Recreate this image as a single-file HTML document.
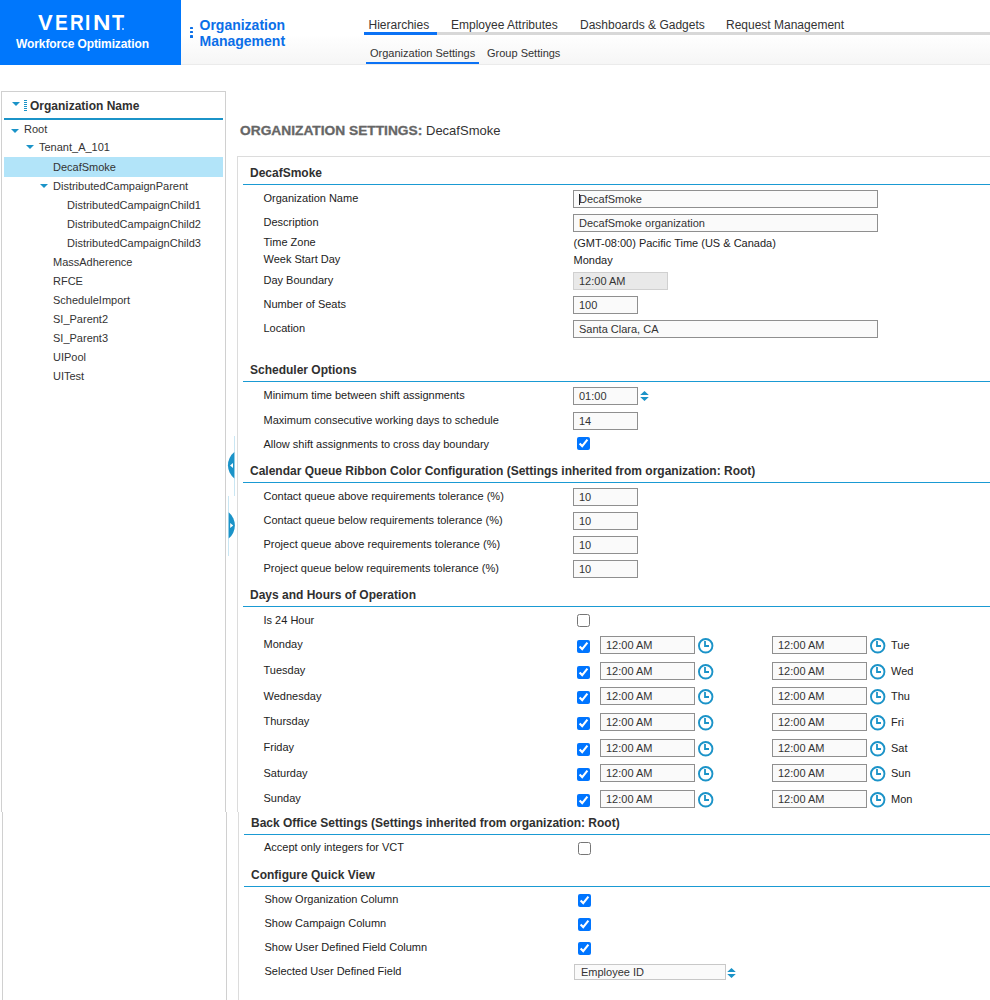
<!DOCTYPE html>
<html><head><meta charset="utf-8"><style>
html,body{margin:0;padding:0}
body{width:990px;height:1000px;overflow:hidden;position:relative;background:#fff;font-family:"Liberation Sans",sans-serif;color:#333}
.t{position:absolute;white-space:nowrap;line-height:1}
input[type=checkbox]{accent-color:#0075ff}
</style></head><body>
<div style="position:absolute;left:0px;top:0px;width:181px;height:65px;background:#0077fc"></div>
<div class="t" style="left:38px;top:12px;font-size:22px;font-weight:bold;color:#fff;transform:scaleX(1.0);transform-origin:0 0;">V</div>
<div class="t" style="left:55px;top:12px;font-size:22px;font-weight:bold;color:#fff;transform:scaleX(0.87);transform-origin:0 0;">E</div>
<div class="t" style="left:70px;top:12px;font-size:22px;font-weight:bold;color:#fff;transform:scaleX(0.86);transform-origin:0 0;">R</div>
<div class="t" style="left:84.8px;top:12px;font-size:22px;font-weight:bold;color:#fff;transform:scaleX(0.86);transform-origin:0 0;">I</div>
<div class="t" style="left:93px;top:12px;font-size:22px;font-weight:bold;color:#fff;transform:scaleX(1.1);transform-origin:0 0;">N</div>
<div class="t" style="left:112px;top:12px;font-size:22px;font-weight:bold;color:#fff;transform:scaleX(0.9);transform-origin:0 0;">T</div>
<div style="position:absolute;left:122px;top:28px;width:1.8px;height:1.8px;background:#cfe3ff;border-radius:1px"></div>
<div class="t" style="left:16px;top:37.5px;font-size:12px;font-weight:bold;color:#fff;letter-spacing:-0.1px;">Workforce Optimization</div>
<div style="position:absolute;left:181px;top:0px;width:809px;height:64px;background:linear-gradient(to bottom,#fff 0,#fff 35px,#fdfdfd 40px,#f6f6f6 64px)"></div>
<div style="position:absolute;left:181px;top:64px;width:809px;height:1px;background:#ebebeb"></div>
<div style="position:absolute;left:190.2px;top:27px;width:2.8px;height:2.3px;background:#0b6fe8;border-radius:0.6px"></div>
<div style="position:absolute;left:190.2px;top:31.2px;width:2.8px;height:2.3px;background:#0b6fe8;border-radius:0.6px"></div>
<div style="position:absolute;left:190.2px;top:35.4px;width:2.8px;height:2.3px;background:#0b6fe8;border-radius:0.6px"></div>
<div class="t" style="left:199.5px;top:18px;font-size:14px;font-weight:bold;color:#0b6fe8;">Organization</div>
<div class="t" style="left:199.5px;top:34px;font-size:14px;font-weight:bold;color:#0b6fe8;">Management</div>
<div style="position:absolute;left:364px;top:32px;width:626px;height:3px;background:#d8d8d8"></div>
<div style="position:absolute;left:364px;top:32px;width:72.5px;height:3px;background:#0b72f5"></div>
<div class="t" style="left:368.5px;top:18.5px;font-size:12px;color:#333;">Hierarchies</div>
<div class="t" style="left:451px;top:18.5px;font-size:12px;color:#333;">Employee Attributes</div>
<div class="t" style="left:580px;top:18.5px;font-size:12px;color:#333;">Dashboards &amp; Gadgets</div>
<div class="t" style="left:726px;top:18.5px;font-size:12px;color:#333;">Request Management</div>
<div class="t" style="left:370px;top:48px;font-size:11px;color:#333;">Organization Settings</div>
<div class="t" style="left:487px;top:48px;font-size:11px;color:#333;">Group Settings</div>
<div style="position:absolute;left:366px;top:62px;width:113px;height:2px;background:#0b72f5"></div>
<div style="position:absolute;left:1px;top:91px;width:225px;height:1px;background:#d0d0d0"></div>
<div style="position:absolute;left:1px;top:91px;width:1px;height:721px;background:#d0d0d0"></div>
<div style="position:absolute;left:225px;top:91px;width:1px;height:721px;background:#d0d0d0"></div>
<div style="position:absolute;left:2px;top:812px;width:1px;height:188px;background:#d0d0d0"></div>
<div style="position:absolute;left:226px;top:812px;width:1px;height:188px;background:#d0d0d0"></div>
<div style="position:absolute;left:12px;top:102px;width:0;height:0;border-left:4.5px solid transparent;border-right:4.5px solid transparent;border-top:4.5px solid #1b93c8"></div>
<div style="position:absolute;left:24px;top:100px;width:3px;height:1px;background:#1b93c8"></div>
<div style="position:absolute;left:24px;top:102px;width:3px;height:1px;background:#1b93c8"></div>
<div style="position:absolute;left:24px;top:104px;width:3px;height:1px;background:#1b93c8"></div>
<div style="position:absolute;left:24px;top:106px;width:3px;height:1px;background:#1b93c8"></div>
<div style="position:absolute;left:24px;top:108px;width:3px;height:1px;background:#1b93c8"></div>
<div style="position:absolute;left:24px;top:110px;width:3px;height:1px;background:#1b93c8"></div>
<div class="t" style="left:30px;top:99.5px;font-size:12px;font-weight:bold;color:#303030;">Organization Name</div>
<div style="position:absolute;left:4px;top:118px;width:219px;height:2px;background:#1b93c8"></div>
<div style="position:absolute;left:4px;top:157px;width:219px;height:20px;background:#b2e4f9"></div>
<div style="position:absolute;left:11px;top:129px;width:0;height:0;border-left:4.4px solid transparent;border-right:4.4px solid transparent;border-top:4px solid #1b93c8"></div>
<div class="t" style="left:24px;top:124px;font-size:11px;">Root</div>
<div style="position:absolute;left:26px;top:145px;width:0;height:0;border-left:4.4px solid transparent;border-right:4.4px solid transparent;border-top:4px solid #1b93c8"></div>
<div class="t" style="left:39px;top:142px;font-size:11px;">Tenant_A_101</div>
<div class="t" style="left:53px;top:162px;font-size:11px;">DecafSmoke</div>
<div style="position:absolute;left:40px;top:184px;width:0;height:0;border-left:4.4px solid transparent;border-right:4.4px solid transparent;border-top:4px solid #1b93c8"></div>
<div class="t" style="left:53px;top:181px;font-size:11px;">DistributedCampaignParent</div>
<div class="t" style="left:67px;top:199.5px;font-size:11px;">DistributedCampaignChild1</div>
<div class="t" style="left:67px;top:218.5px;font-size:11px;">DistributedCampaignChild2</div>
<div class="t" style="left:67px;top:237.5px;font-size:11px;">DistributedCampaignChild3</div>
<div class="t" style="left:53px;top:256.5px;font-size:11px;">MassAdherence</div>
<div class="t" style="left:53px;top:275.5px;font-size:11px;">RFCE</div>
<div class="t" style="left:53px;top:294.5px;font-size:11px;">ScheduleImport</div>
<div class="t" style="left:53px;top:313.5px;font-size:11px;">SI_Parent2</div>
<div class="t" style="left:53px;top:332.5px;font-size:11px;">SI_Parent3</div>
<div class="t" style="left:53px;top:351.5px;font-size:11px;">UIPool</div>
<div class="t" style="left:53px;top:370.5px;font-size:11px;">UITest</div>
<div style="position:absolute;left:234px;top:436px;width:1px;height:60px;background:#c9e6f3"></div>
<div style="position:absolute;left:228px;top:496px;width:1px;height:60px;background:#c9e6f3"></div>
<svg style="position:absolute;left:220px;top:440px" width="20" height="110" viewBox="220 440 20 110"><path d="M234.3 452 A17 17 0 0 0 234.3 478.5 Z" fill="#1b93c8"/><path d="M230 465.5 L233 463 L233 468 Z" fill="#fff"/><path d="M228.7 512.3 A17 17 0 0 1 228.7 538.5 Z" fill="#1b93c8"/><path d="M233.2 525.5 L230.2 523 L230.2 528 Z" fill="#fff"/></svg>
<div class="t" style="left:239.5px;top:124.5px;font-size:12.5px;font-weight:bold;color:#666;transform:scaleX(1.1);transform-origin:0 0;-webkit-text-stroke:0.3px #666;">ORGANIZATION SETTINGS:</div>
<div class="t" style="left:426px;top:123.5px;font-size:13px;color:#333;">DecafSmoke</div>
<div style="position:absolute;left:237px;top:156px;width:753px;height:1px;background:#dcdcdc"></div>
<div style="position:absolute;left:237px;top:156px;width:1px;height:656px;background:#dcdcdc"></div>
<div style="position:absolute;left:238px;top:812px;width:1px;height:188px;background:#dcdcdc"></div>
<div class="t" style="left:250px;top:167px;font-size:12px;font-weight:bold;color:#303030;">DecafSmoke</div>
<div style="position:absolute;left:243px;top:184px;width:747px;height:1px;background:#1a9ad3"></div>
<div class="t" style="left:263.5px;top:192.5px;font-size:11px;color:#222;">Organization Name</div>
<div style="position:absolute;left:573px;top:190px;width:305px;height:18px;border:1px solid #8f8f8f;background:#fafafa;box-sizing:border-box"></div>
<div class="t" style="left:579px;top:194px;font-size:11px;color:#333;">DecafSmoke</div>
<div style="position:absolute;left:579px;top:194px;width:1px;height:11px;background:#222"></div>
<div class="t" style="left:263.5px;top:216.5px;font-size:11px;color:#222;">Description</div>
<div style="position:absolute;left:573px;top:214px;width:305px;height:18px;border:1px solid #8f8f8f;background:#fafafa;box-sizing:border-box"></div>
<div class="t" style="left:579px;top:218px;font-size:11px;color:#333;">DecafSmoke organization</div>
<div class="t" style="left:263.5px;top:237px;font-size:11px;color:#222;">Time Zone</div>
<div class="t" style="left:573.5px;top:238px;font-size:11px;color:#222;">(GMT-08:00) Pacific Time (US &amp; Canada)</div>
<div class="t" style="left:263.5px;top:254px;font-size:11px;color:#222;">Week Start Day</div>
<div class="t" style="left:573.5px;top:255px;font-size:11px;color:#222;">Monday</div>
<div class="t" style="left:263.5px;top:275px;font-size:11px;color:#222;">Day Boundary</div>
<div style="position:absolute;left:573px;top:272px;width:95px;height:18px;border:1px solid #d0d0d0;background:#e9e9e9;box-sizing:border-box"></div>
<div class="t" style="left:579px;top:276px;font-size:11px;color:#333;">12:00 AM</div>
<div class="t" style="left:263.5px;top:298.5px;font-size:11px;color:#222;">Number of Seats</div>
<div style="position:absolute;left:573px;top:296px;width:65px;height:18px;border:1px solid #8f8f8f;background:#fafafa;box-sizing:border-box"></div>
<div class="t" style="left:579px;top:300px;font-size:11px;color:#333;">100</div>
<div class="t" style="left:263.5px;top:322.5px;font-size:11px;color:#222;">Location</div>
<div style="position:absolute;left:573px;top:320px;width:305px;height:18px;border:1px solid #8f8f8f;background:#fafafa;box-sizing:border-box"></div>
<div class="t" style="left:579px;top:324px;font-size:11px;color:#333;">Santa Clara, CA</div>
<div class="t" style="left:250px;top:364px;font-size:12px;font-weight:bold;color:#303030;">Scheduler Options</div>
<div style="position:absolute;left:243px;top:381px;width:747px;height:1px;background:#1a9ad3"></div>
<div class="t" style="left:263.5px;top:389.5px;font-size:11px;color:#222;">Minimum time between shift assignments</div>
<div style="position:absolute;left:573px;top:387px;width:65px;height:18px;border:1px solid #8f8f8f;background:#fafafa;box-sizing:border-box"></div>
<div class="t" style="left:579px;top:391px;font-size:11px;color:#333;">01:00</div>
<svg style="position:absolute;left:639px;top:390px" width="10" height="12"><path d="M1.2 4.9 L5.5 1 L9.8 4.9Z M1.2 6.9 L5.5 11 L9.8 6.9Z" fill="#1b93c8"/></svg>
<div class="t" style="left:263.5px;top:415px;font-size:11px;color:#222;">Maximum consecutive working days to schedule</div>
<div style="position:absolute;left:573px;top:412px;width:65px;height:18px;border:1px solid #8f8f8f;background:#fafafa;box-sizing:border-box"></div>
<div class="t" style="left:579px;top:416px;font-size:11px;color:#333;">14</div>
<div class="t" style="left:263.5px;top:439px;font-size:11px;color:#222;">Allow shift assignments to cross day boundary</div>
<input type="checkbox" checked style="position:absolute;left:577px;top:437px;width:13px;height:13px;margin:0">
<div class="t" style="left:250px;top:465px;font-size:12px;font-weight:bold;color:#303030;">Calendar Queue Ribbon Color Configuration (Settings inherited from organization: Root)</div>
<div style="position:absolute;left:243px;top:482px;width:747px;height:1px;background:#1a9ad3"></div>
<div class="t" style="left:263.5px;top:490.5px;font-size:11px;color:#222;">Contact queue above requirements tolerance (%)</div>
<div style="position:absolute;left:573px;top:488px;width:65px;height:18px;border:1px solid #8f8f8f;background:#fafafa;box-sizing:border-box"></div>
<div class="t" style="left:579px;top:492px;font-size:11px;color:#333;">10</div>
<div class="t" style="left:263.5px;top:514.5px;font-size:11px;color:#222;">Contact queue below requirements tolerance (%)</div>
<div style="position:absolute;left:573px;top:512px;width:65px;height:18px;border:1px solid #8f8f8f;background:#fafafa;box-sizing:border-box"></div>
<div class="t" style="left:579px;top:516px;font-size:11px;color:#333;">10</div>
<div class="t" style="left:263.5px;top:538.5px;font-size:11px;color:#222;">Project queue above requirements tolerance (%)</div>
<div style="position:absolute;left:573px;top:536px;width:65px;height:18px;border:1px solid #8f8f8f;background:#fafafa;box-sizing:border-box"></div>
<div class="t" style="left:579px;top:540px;font-size:11px;color:#333;">10</div>
<div class="t" style="left:263.5px;top:562.5px;font-size:11px;color:#222;">Project queue below requirements tolerance (%)</div>
<div style="position:absolute;left:573px;top:560px;width:65px;height:18px;border:1px solid #8f8f8f;background:#fafafa;box-sizing:border-box"></div>
<div class="t" style="left:579px;top:564px;font-size:11px;color:#333;">10</div>
<div class="t" style="left:250px;top:588.5px;font-size:12px;font-weight:bold;color:#303030;">Days and Hours of Operation</div>
<div style="position:absolute;left:243px;top:606px;width:747px;height:1px;background:#1a9ad3"></div>
<div class="t" style="left:263.5px;top:615px;font-size:11px;color:#222;">Is 24 Hour</div>
<input type="checkbox"  style="position:absolute;left:577px;top:614px;width:13px;height:13px;margin:0">
<div class="t" style="left:263.5px;top:639px;font-size:11px;color:#222;">Monday</div>
<input type="checkbox" checked style="position:absolute;left:577px;top:640px;width:13px;height:13px;margin:0">
<div style="position:absolute;left:600px;top:636px;width:95px;height:18px;border:1px solid #8f8f8f;background:#fafafa;box-sizing:border-box"></div>
<div class="t" style="left:606px;top:640px;font-size:11px;color:#333;">12:00 AM</div>
<svg style="position:absolute;left:698px;top:638px" width="16" height="16"><circle cx="7.7" cy="7.8" r="6.75" fill="none" stroke="#1b93c8" stroke-width="1.9"/><path d="M7 3 V8 H11" fill="none" stroke="#1b93c8" stroke-width="1.8"/></svg>
<div style="position:absolute;left:772px;top:636px;width:95px;height:18px;border:1px solid #8f8f8f;background:#fafafa;box-sizing:border-box"></div>
<div class="t" style="left:778px;top:640px;font-size:11px;color:#333;">12:00 AM</div>
<svg style="position:absolute;left:870px;top:638px" width="16" height="16"><circle cx="7.7" cy="7.8" r="6.75" fill="none" stroke="#1b93c8" stroke-width="1.9"/><path d="M7 3 V8 H11" fill="none" stroke="#1b93c8" stroke-width="1.8"/></svg>
<div class="t" style="left:891px;top:639.5px;font-size:11px;color:#222;">Tue</div>
<div class="t" style="left:263.5px;top:665px;font-size:11px;color:#222;">Tuesday</div>
<input type="checkbox" checked style="position:absolute;left:577px;top:666px;width:13px;height:13px;margin:0">
<div style="position:absolute;left:600px;top:662px;width:95px;height:18px;border:1px solid #8f8f8f;background:#fafafa;box-sizing:border-box"></div>
<div class="t" style="left:606px;top:666px;font-size:11px;color:#333;">12:00 AM</div>
<svg style="position:absolute;left:698px;top:664px" width="16" height="16"><circle cx="7.7" cy="7.8" r="6.75" fill="none" stroke="#1b93c8" stroke-width="1.9"/><path d="M7 3 V8 H11" fill="none" stroke="#1b93c8" stroke-width="1.8"/></svg>
<div style="position:absolute;left:772px;top:662px;width:95px;height:18px;border:1px solid #8f8f8f;background:#fafafa;box-sizing:border-box"></div>
<div class="t" style="left:778px;top:666px;font-size:11px;color:#333;">12:00 AM</div>
<svg style="position:absolute;left:870px;top:664px" width="16" height="16"><circle cx="7.7" cy="7.8" r="6.75" fill="none" stroke="#1b93c8" stroke-width="1.9"/><path d="M7 3 V8 H11" fill="none" stroke="#1b93c8" stroke-width="1.8"/></svg>
<div class="t" style="left:891px;top:665.5px;font-size:11px;color:#222;">Wed</div>
<div class="t" style="left:263.5px;top:691px;font-size:11px;color:#222;">Wednesday</div>
<input type="checkbox" checked style="position:absolute;left:577px;top:691px;width:13px;height:13px;margin:0">
<div style="position:absolute;left:600px;top:687px;width:95px;height:18px;border:1px solid #8f8f8f;background:#fafafa;box-sizing:border-box"></div>
<div class="t" style="left:606px;top:691px;font-size:11px;color:#333;">12:00 AM</div>
<svg style="position:absolute;left:698px;top:689px" width="16" height="16"><circle cx="7.7" cy="7.8" r="6.75" fill="none" stroke="#1b93c8" stroke-width="1.9"/><path d="M7 3 V8 H11" fill="none" stroke="#1b93c8" stroke-width="1.8"/></svg>
<div style="position:absolute;left:772px;top:687px;width:95px;height:18px;border:1px solid #8f8f8f;background:#fafafa;box-sizing:border-box"></div>
<div class="t" style="left:778px;top:691px;font-size:11px;color:#333;">12:00 AM</div>
<svg style="position:absolute;left:870px;top:689px" width="16" height="16"><circle cx="7.7" cy="7.8" r="6.75" fill="none" stroke="#1b93c8" stroke-width="1.9"/><path d="M7 3 V8 H11" fill="none" stroke="#1b93c8" stroke-width="1.8"/></svg>
<div class="t" style="left:891px;top:690.5px;font-size:11px;color:#222;">Thu</div>
<div class="t" style="left:263.5px;top:716px;font-size:11px;color:#222;">Thursday</div>
<input type="checkbox" checked style="position:absolute;left:577px;top:717px;width:13px;height:13px;margin:0">
<div style="position:absolute;left:600px;top:713px;width:95px;height:18px;border:1px solid #8f8f8f;background:#fafafa;box-sizing:border-box"></div>
<div class="t" style="left:606px;top:717px;font-size:11px;color:#333;">12:00 AM</div>
<svg style="position:absolute;left:698px;top:715px" width="16" height="16"><circle cx="7.7" cy="7.8" r="6.75" fill="none" stroke="#1b93c8" stroke-width="1.9"/><path d="M7 3 V8 H11" fill="none" stroke="#1b93c8" stroke-width="1.8"/></svg>
<div style="position:absolute;left:772px;top:713px;width:95px;height:18px;border:1px solid #8f8f8f;background:#fafafa;box-sizing:border-box"></div>
<div class="t" style="left:778px;top:717px;font-size:11px;color:#333;">12:00 AM</div>
<svg style="position:absolute;left:870px;top:715px" width="16" height="16"><circle cx="7.7" cy="7.8" r="6.75" fill="none" stroke="#1b93c8" stroke-width="1.9"/><path d="M7 3 V8 H11" fill="none" stroke="#1b93c8" stroke-width="1.8"/></svg>
<div class="t" style="left:891px;top:716.5px;font-size:11px;color:#222;">Fri</div>
<div class="t" style="left:263.5px;top:742px;font-size:11px;color:#222;">Friday</div>
<input type="checkbox" checked style="position:absolute;left:577px;top:743px;width:13px;height:13px;margin:0">
<div style="position:absolute;left:600px;top:739px;width:95px;height:18px;border:1px solid #8f8f8f;background:#fafafa;box-sizing:border-box"></div>
<div class="t" style="left:606px;top:743px;font-size:11px;color:#333;">12:00 AM</div>
<svg style="position:absolute;left:698px;top:741px" width="16" height="16"><circle cx="7.7" cy="7.8" r="6.75" fill="none" stroke="#1b93c8" stroke-width="1.9"/><path d="M7 3 V8 H11" fill="none" stroke="#1b93c8" stroke-width="1.8"/></svg>
<div style="position:absolute;left:772px;top:739px;width:95px;height:18px;border:1px solid #8f8f8f;background:#fafafa;box-sizing:border-box"></div>
<div class="t" style="left:778px;top:743px;font-size:11px;color:#333;">12:00 AM</div>
<svg style="position:absolute;left:870px;top:741px" width="16" height="16"><circle cx="7.7" cy="7.8" r="6.75" fill="none" stroke="#1b93c8" stroke-width="1.9"/><path d="M7 3 V8 H11" fill="none" stroke="#1b93c8" stroke-width="1.8"/></svg>
<div class="t" style="left:891px;top:742.5px;font-size:11px;color:#222;">Sat</div>
<div class="t" style="left:263.5px;top:768px;font-size:11px;color:#222;">Saturday</div>
<input type="checkbox" checked style="position:absolute;left:577px;top:768px;width:13px;height:13px;margin:0">
<div style="position:absolute;left:600px;top:764px;width:95px;height:18px;border:1px solid #8f8f8f;background:#fafafa;box-sizing:border-box"></div>
<div class="t" style="left:606px;top:768px;font-size:11px;color:#333;">12:00 AM</div>
<svg style="position:absolute;left:698px;top:766px" width="16" height="16"><circle cx="7.7" cy="7.8" r="6.75" fill="none" stroke="#1b93c8" stroke-width="1.9"/><path d="M7 3 V8 H11" fill="none" stroke="#1b93c8" stroke-width="1.8"/></svg>
<div style="position:absolute;left:772px;top:764px;width:95px;height:18px;border:1px solid #8f8f8f;background:#fafafa;box-sizing:border-box"></div>
<div class="t" style="left:778px;top:768px;font-size:11px;color:#333;">12:00 AM</div>
<svg style="position:absolute;left:870px;top:766px" width="16" height="16"><circle cx="7.7" cy="7.8" r="6.75" fill="none" stroke="#1b93c8" stroke-width="1.9"/><path d="M7 3 V8 H11" fill="none" stroke="#1b93c8" stroke-width="1.8"/></svg>
<div class="t" style="left:891px;top:767.5px;font-size:11px;color:#222;">Sun</div>
<div class="t" style="left:263.5px;top:793px;font-size:11px;color:#222;">Sunday</div>
<input type="checkbox" checked style="position:absolute;left:577px;top:794px;width:13px;height:13px;margin:0">
<div style="position:absolute;left:600px;top:790px;width:95px;height:18px;border:1px solid #8f8f8f;background:#fafafa;box-sizing:border-box"></div>
<div class="t" style="left:606px;top:794px;font-size:11px;color:#333;">12:00 AM</div>
<svg style="position:absolute;left:698px;top:792px" width="16" height="16"><circle cx="7.7" cy="7.8" r="6.75" fill="none" stroke="#1b93c8" stroke-width="1.9"/><path d="M7 3 V8 H11" fill="none" stroke="#1b93c8" stroke-width="1.8"/></svg>
<div style="position:absolute;left:772px;top:790px;width:95px;height:18px;border:1px solid #8f8f8f;background:#fafafa;box-sizing:border-box"></div>
<div class="t" style="left:778px;top:794px;font-size:11px;color:#333;">12:00 AM</div>
<svg style="position:absolute;left:870px;top:792px" width="16" height="16"><circle cx="7.7" cy="7.8" r="6.75" fill="none" stroke="#1b93c8" stroke-width="1.9"/><path d="M7 3 V8 H11" fill="none" stroke="#1b93c8" stroke-width="1.8"/></svg>
<div class="t" style="left:891px;top:793.5px;font-size:11px;color:#222;">Mon</div>
<div class="t" style="left:251px;top:817px;font-size:12px;font-weight:bold;color:#303030;">Back Office Settings (Settings inherited from organization: Root)</div>
<div style="position:absolute;left:244px;top:834px;width:746px;height:1px;background:#1a9ad3"></div>
<div class="t" style="left:264px;top:842px;font-size:11px;color:#222;">Accept only integers for VCT</div>
<input type="checkbox"  style="position:absolute;left:578px;top:842px;width:13px;height:13px;margin:0">
<div class="t" style="left:251px;top:869px;font-size:12px;font-weight:bold;color:#303030;">Configure Quick View</div>
<div style="position:absolute;left:244px;top:886px;width:746px;height:1px;background:#1a9ad3"></div>
<div class="t" style="left:264.5px;top:893.5px;font-size:11px;color:#222;">Show Organization Column</div>
<input type="checkbox" checked style="position:absolute;left:578px;top:894px;width:13px;height:13px;margin:0">
<div class="t" style="left:264.5px;top:917.5px;font-size:11px;color:#222;">Show Campaign Column</div>
<input type="checkbox" checked style="position:absolute;left:578px;top:918px;width:13px;height:13px;margin:0">
<div class="t" style="left:264.5px;top:941.5px;font-size:11px;color:#222;">Show User Defined Field Column</div>
<input type="checkbox" checked style="position:absolute;left:578px;top:942px;width:13px;height:13px;margin:0">
<div class="t" style="left:264.5px;top:965.5px;font-size:11px;color:#222;">Selected User Defined Field</div>
<div style="position:absolute;left:574px;top:964px;width:152px;height:16px;border:1px solid #c8c8c8;background:#fafafa;box-sizing:border-box"></div>
<div class="t" style="left:581px;top:967px;font-size:11px;color:#333;">Employee ID</div>
<svg style="position:absolute;left:726px;top:967px" width="10" height="12"><path d="M1.2 4.9 L5.5 1 L9.8 4.9Z M1.2 6.9 L5.5 11 L9.8 6.9Z" fill="#1b93c8"/></svg>
</body></html>
